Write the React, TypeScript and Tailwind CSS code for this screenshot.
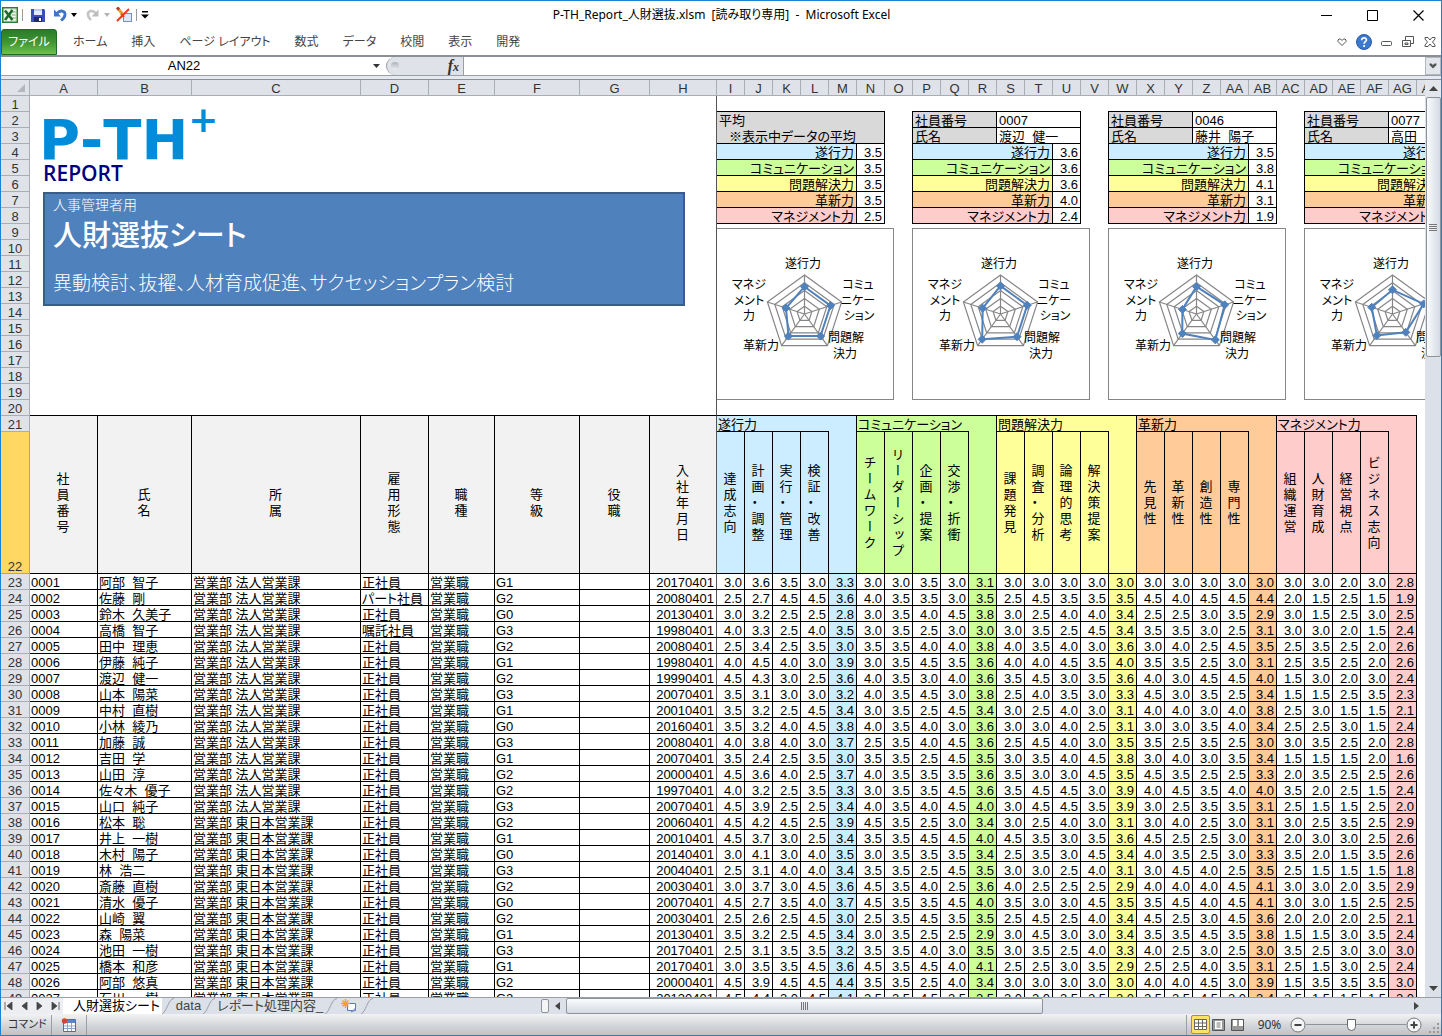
import React from 'react';

type Tone = 'blue' | 'green' | 'yellow' | 'orange' | 'pink';

interface Group {
  title: string;
  tone: Tone;
  items: string[];
}

interface Employee {
  name: string;
  grade: string;
  joined: string;
  scores: string;
  type?: string;
}

interface Card {
  id?: string;
  name?: string;
  values: number[];
}

const toneBg: Record<Tone, string> = {
  blue: 'bg-[#ccecff]',
  green: 'bg-[#ccff99]',
  yellow: 'bg-[#ffff99]',
  orange: 'bg-[#ffcc99]',
  pink: 'bg-[#ffcccc]',
};

const groups: Group[] = [
  { title: '遂行力', tone: 'blue', items: ['達成志向', '計画・調整', '実行・管理', '検証・改善'] },
  { title: 'コミュニケーション', tone: 'green', items: ['チームワーク', 'リーダーシップ', '企画・提案', '交渉・折衝'] },
  { title: '問題解決力', tone: 'yellow', items: ['課題発見', '調査・分析', '論理的思考', '解決策提案'] },
  { title: '革新力', tone: 'orange', items: ['先見性', '革新性', '創造性', '専門性'] },
  { title: 'マネジメント力', tone: 'pink', items: ['組織運営', '人財育成', '経営視点', 'ビジネス志向'] },
];

const profileColumns = ['社員番号', '氏名', '所属', '雇用形態', '職種', '等級', '役職', '入社年月日'];

const columnLetters = [
  'A', 'B', 'C', 'D', 'E', 'F', 'G', 'H', 'I', 'J', 'K', 'L', 'M', 'N', 'O', 'P', 'Q', 'R', 'S', 'T',
  'U', 'V', 'W', 'X', 'Y', 'Z', 'AA', 'AB', 'AC', 'AD', 'AE', 'AF', 'AG', 'AH',
];

const cards: Card[] = [
  { values: [3.5, 3.5, 3.5, 3.5, 2.5] },
  { id: '0007', name: '渡辺  健一', values: [3.6, 3.6, 3.6, 4.0, 2.4] },
  { id: '0046', name: '藤井  陽子', values: [3.5, 3.8, 4.1, 3.1, 1.9] },
  { id: '0077', name: '高田', values: [3.1, 4.2, 2.9, 3.4, 2.8] },
];

const employees: Employee[] = [
  { name: '阿部  智子', grade: 'G1', joined: '20170401', scores: '3.0 3.6 3.5 3.0 3.3 3.0 3.0 3.5 3.0 3.1 3.0 3.0 3.0 3.0 3.0 3.0 3.0 3.0 3.0 3.0 3.0 3.0 2.0 3.0 2.8' },
  { name: '佐藤  剛', grade: 'G2', joined: '20080401', type: 'パート社員', scores: '2.5 2.7 4.5 4.5 3.6 4.0 3.5 3.5 3.0 3.5 2.5 4.5 3.5 3.5 3.5 4.5 4.0 4.5 4.5 4.4 2.0 1.5 2.5 1.5 1.9' },
  { name: '鈴木  久美子', grade: 'G0', joined: '20130401', scores: '3.0 3.2 2.5 2.5 2.8 3.0 3.5 4.0 4.5 3.8 3.0 2.5 4.0 4.0 3.4 2.5 2.5 3.0 3.5 2.9 3.0 1.5 2.5 3.0 2.5' },
  { name: '高橋  智子', grade: 'G3', joined: '19980401', type: '嘱託社員', scores: '4.0 3.3 2.5 4.0 3.5 3.0 3.5 2.5 3.0 3.0 3.0 3.5 2.5 4.5 3.4 3.5 3.5 3.0 2.5 3.1 3.0 3.0 2.0 1.5 2.4' },
  { name: '田中  理恵', grade: 'G2', joined: '20080401', scores: '2.5 3.4 2.5 3.5 3.0 3.5 3.5 4.0 4.0 3.8 4.0 3.5 4.0 3.0 3.6 3.0 4.0 2.5 4.5 3.5 2.5 3.5 2.5 2.0 2.6' },
  { name: '伊藤  純子', grade: 'G1', joined: '19980401', scores: '4.0 4.5 4.0 3.0 3.9 3.0 3.5 4.5 3.5 3.6 4.0 4.0 4.5 3.5 4.0 3.5 3.5 2.5 3.0 3.1 2.5 3.5 2.5 2.0 2.6' },
  { name: '渡辺  健一', grade: 'G2', joined: '19990401', scores: '4.5 4.3 3.0 2.5 3.6 4.0 3.5 3.0 4.0 3.6 3.5 4.5 3.0 3.5 3.6 4.0 3.0 4.5 4.5 4.0 1.5 3.0 2.0 3.0 2.4' },
  { name: '山本  陽菜', grade: 'G3', joined: '20070401', scores: '3.5 3.1 3.0 3.0 3.2 4.0 3.5 4.5 3.0 3.8 2.5 4.0 3.5 3.0 3.3 4.5 3.0 3.5 2.5 3.4 1.5 1.5 2.5 3.5 2.3' },
  { name: '中村  直樹', grade: 'G1', joined: '20010401', scores: '3.5 3.2 2.5 4.5 3.4 3.0 3.5 2.5 4.5 3.4 3.0 2.5 4.0 3.0 3.1 4.0 4.0 3.0 4.0 3.8 2.5 3.0 1.5 1.5 2.1' },
  { name: '小林  綾乃', grade: 'G0', joined: '20160401', scores: '3.5 3.2 4.0 4.5 3.8 4.0 3.5 4.0 3.0 3.6 3.0 3.0 4.0 2.5 3.1 3.0 3.0 3.5 4.0 3.4 2.5 2.5 3.0 1.5 2.4' },
  { name: '加藤  誠', grade: 'G3', joined: '20080401', scores: '4.0 3.8 4.0 3.0 3.7 2.5 3.5 4.0 4.5 3.6 2.5 4.5 4.0 3.0 3.5 3.5 2.5 3.5 2.5 3.0 3.0 3.5 2.5 2.0 2.8' },
  { name: '吉田  学', grade: 'G1', joined: '20070401', scores: '3.5 2.4 2.5 3.5 3.0 3.5 3.5 2.5 4.5 3.5 3.0 3.5 4.0 4.5 3.8 3.0 4.0 3.0 3.5 3.4 1.5 1.5 1.5 2.0 1.6' },
  { name: '山田  淳', grade: 'G2', joined: '20000401', scores: '4.5 3.6 4.0 2.5 3.7 4.0 3.5 3.5 3.5 3.6 3.5 3.0 3.0 4.5 3.5 4.5 3.5 2.5 2.5 3.3 2.0 3.5 2.5 2.5 2.6' },
  { name: '佐々木  優子', grade: 'G2', joined: '19970401', scores: '4.0 3.2 2.5 3.5 3.3 3.0 3.5 3.5 4.5 3.6 3.5 4.5 4.5 3.0 3.9 4.0 4.5 3.5 4.0 4.0 3.5 2.0 2.5 1.5 2.4' },
  { name: '山口  純子', grade: 'G3', joined: '20070401', scores: '4.5 3.9 2.5 2.5 3.4 4.0 3.5 4.0 4.5 4.0 3.0 4.5 4.5 3.5 3.9 3.0 2.5 3.5 3.5 3.1 2.5 1.5 1.5 2.5 2.0' },
  { name: '松本  聡', grade: 'G2', joined: '20060401', scores: '4.5 4.2 4.5 2.5 3.9 4.5 3.5 2.5 3.0 3.4 3.0 2.5 4.0 3.0 3.1 3.0 4.0 2.5 3.0 3.1 3.0 2.5 3.5 2.5 2.9' },
  { name: '井上  一樹', grade: 'G1', joined: '20010401', scores: '4.5 3.7 3.0 2.5 3.4 3.5 3.5 4.5 4.5 4.0 4.5 3.5 3.0 3.5 3.6 4.5 2.5 2.5 3.0 3.1 2.0 3.0 3.0 2.5 2.6' },
  { name: '木村  陽子', grade: 'G0', joined: '20140401', scores: '3.0 4.1 3.0 4.0 3.5 3.0 3.5 3.5 3.5 3.4 2.5 3.5 3.0 4.5 3.4 4.0 3.5 2.5 3.0 3.3 3.5 2.0 1.5 3.5 2.6' },
  { name: '林  浩二', grade: 'G3', joined: '20040401', scores: '2.5 3.1 4.0 4.0 3.4 3.5 3.5 2.5 4.5 3.5 3.0 3.0 2.5 4.0 3.1 3.0 4.5 4.0 2.5 3.5 2.5 1.5 1.5 1.5 1.8' },
  { name: '斎藤  直樹', grade: 'G2', joined: '20030401', scores: '3.0 3.7 3.0 4.5 3.6 4.5 3.5 4.0 2.5 3.6 4.0 2.5 2.5 2.5 2.9 4.0 4.0 4.0 4.5 4.1 3.0 3.0 2.0 3.5 2.9' },
  { name: '清水  優子', grade: 'G0', joined: '20070401', scores: '4.5 2.7 3.5 4.0 3.7 4.5 3.5 3.5 4.5 4.0 3.5 3.0 3.0 4.5 3.5 3.5 4.5 4.0 4.5 4.1 3.0 3.0 1.5 2.5 2.5' },
  { name: '山崎  翼', grade: 'G2', joined: '20030401', scores: '2.5 2.6 2.5 4.5 3.0 2.5 3.5 4.5 3.5 3.5 2.5 4.5 2.5 4.0 3.4 4.5 2.5 3.0 4.5 3.6 2.0 2.0 2.0 2.5 2.1' },
  { name: '森  陽菜', grade: 'G1', joined: '20130401', scores: '3.5 3.2 2.5 4.5 3.4 3.0 3.5 2.5 2.5 2.9 3.0 4.5 3.0 3.0 3.4 3.5 3.5 4.5 3.5 3.8 1.5 1.5 3.0 3.5 2.4' },
  { name: '池田  一樹', grade: 'G3', joined: '20170401', scores: '2.5 3.1 3.5 3.5 3.2 3.5 3.5 4.0 3.0 3.5 3.0 3.5 2.5 4.0 3.3 4.0 2.5 3.0 2.5 3.0 3.5 2.5 3.0 3.0 3.0' },
  { name: '橋本  和彦', grade: 'G1', joined: '20170401', scores: '3.0 3.5 3.5 4.5 3.6 4.5 3.5 4.5 4.0 4.1 2.5 2.5 3.0 3.5 2.9 2.5 2.5 4.0 3.5 3.1 2.5 1.5 3.0 2.5 2.4' },
  { name: '阿部  悠真', grade: 'G2', joined: '20000401', scores: '4.5 3.9 4.5 4.5 4.4 3.5 3.5 2.5 4.0 3.4 3.0 3.0 3.0 3.0 3.0 4.0 4.0 4.5 3.0 3.9 1.5 3.5 3.5 3.5 3.0' },
  { name: '石川  一樹', grade: 'G2', joined: '20130401', scores: '4.5 4.4 3.0 4.5 4.1 3.5 3.5 4.5 3.5 3.5 3.0 3.0 3.5 2.5 3.0 2.5 3.5 4.5 3.0 3.4 3.5 1.5 1.5 1.5 2.0' },
];

const ribbonTabs = ['ホーム', '挿入', 'ページ レイアウト', '数式', 'データ', '校閲', '表示', '開発'];

function Caret({ muted }: { muted?: boolean }) {
  return (
    <svg viewBox="0 0 6 4" className={`h-1 w-1.5 ${muted ? 'fill-[#b5b5b5]' : 'fill-black'}`}>
      <path d="M0 0h6L3 4z" />
    </svg>
  );
}

function QuickAccess() {
  return (
    <div className="flex flex-1 items-center pl-px">
      <svg viewBox="0 0 16 16" className="size-4" aria-label="Excel">
        <rect x=".75" y=".75" width="14.5" height="14.5" fill="#eef6ec" stroke="#2b7d35" strokeWidth="1.5" />
        <path d="M9 2h5v12H9z" fill="#fff" stroke="#8cc08f" strokeWidth=".6" />
        <path d="M10 5h3.5M10 8h3.5M10 11h3.5" stroke="#58a55c" />
        <path d="M3 3.5 10.5 13M10.5 3 3 13" stroke="#1e6b2a" strokeWidth="2.6" />
      </svg>
      <span className="mx-1 h-3 w-px bg-[#9a9a9a]" />
      <button aria-label="上書き保存" className="ml-1">
        <svg viewBox="0 0 14 14" className="size-3.5">
          <path d="M0 1h13l1 1v12H0z" fill="#3b4fb8" />
          <path d="M3 1h8v6H3z" fill="#e4ecfa" />
          <path d="M3 1h8v2H3z" fill="#b9cdf2" />
          <path d="M3 9h8v5H3z" fill="#1f2a66" />
          <path d="M8 10h2v3H8z" fill="#fff" />
        </svg>
      </button>
      <button aria-label="元に戻す" className="ml-2">
        <svg viewBox="0 0 15 14" className="h-3.5 w-[15px]">
          <path d="M4 5.5C7 1.5 12.5 2.5 12 7c-.3 2.500-2 4-4 5.500" fill="none" stroke="#3f74c9" strokeWidth="2.8" />
          <path d="M1 1.500v7h7z" fill="#3f74c9" />
        </svg>
      </button>
      <button aria-label="元に戻す一覧" className="ml-[3px]"><Caret /></button>
      <button aria-label="やり直し" className="ml-2">
        <svg viewBox="0 0 15 14" className="h-3.5 w-[15px]">
          <path d="M11 5.500C8 1.500 2.500 2.500 3 7c.2 2 1.200 3.500 3 5" fill="none" stroke="#c4c4c4" strokeWidth="2.6" />
          <path d="M13.500 1.500v7h-7z" fill="#bdbdbd" />
        </svg>
      </button>
      <button aria-label="やり直し一覧" className="ml-1"><Caret muted /></button>
      <button aria-label="デザイン モード" className="ml-[6px]">
        <svg viewBox="0 0 16 16" className="size-4">
          <rect x="7.500" y="6.500" width="8" height="8" fill="#dbe7f7" stroke="#7790b8" />
          <path d="m1.500 1 5 6" stroke="#e0a030" strokeWidth="3" />
          <path d="m1 .5 2 2" stroke="#b8372b" strokeWidth="3" />
          <path d="M1 14 13 2M5 7l3 3" stroke="#f03a17" strokeWidth="2" />
        </svg>
      </button>
      <span className="ml-1 h-3 w-px bg-[#9a9a9a]" />
      <button aria-label="クイック アクセス ツール バーのユーザー設定" className="ml-1">
        <svg viewBox="0 0 8 8" className="size-2">
          <path d="M1 0h6v1.500H1zM0 3.500h8L4 7.500z" />
        </svg>
      </button>
    </div>
  );
}

function TitleBar() {
  return (
    <header className="flex h-7 shrink-0 items-center bg-white">
      <QuickAccess />
      <h1 className="font-['Noto_Sans','Noto_Sans_CJK_JP',sans-serif] text-xs whitespace-pre text-black">P-TH_Report_人財選抜.xlsm  [読み取り専用]  -  Microsoft Excel</h1>
      <div className="flex flex-1 justify-end">
        <button aria-label="最小化" className="flex h-7 w-[46px] items-center justify-center">
          <svg viewBox="0 0 11 11" className="size-[11px]"><path d="M0 5.500h11" stroke="#000" /></svg>
        </button>
        <button aria-label="最大化" className="flex h-7 w-[46px] items-center justify-center">
          <svg viewBox="0 0 11 11" className="size-[11px]"><path d="M.5.5h10v10H.5z" fill="none" stroke="#000" /></svg>
        </button>
        <button aria-label="閉じる" className="flex h-7 w-[46px] items-center justify-center">
          <svg viewBox="0 0 11 11" className="size-[11px]"><path d="m.5.5 10 10m0-10-10 10" stroke="#000" strokeWidth="1.2" /></svg>
        </button>
      </div>
    </header>
  );
}

function RibbonTabs() {
  return (
    <nav className="flex h-[26px] shrink-0 items-center bg-white text-xs text-[#444]">
      <button className="mr-1 h-[26px] w-14 rounded-t-[3px] border border-[#1d6b24] bg-linear-to-b from-[#2a7a2a] via-[#3f9433] to-[#6cc04a] text-white">
        ファイル
      </button>
      {ribbonTabs.map((tab) => (
        <button key={tab} className="px-3">{tab}</button>
      ))}
      <div className="ml-auto flex items-center gap-1.5 pr-[3px]">
        <button aria-label="リボンの最小化">
          <svg viewBox="0 0 16 16" className="size-4">
            <path d="M8 11.500 4 7.500V6l1-1h1.500L8 6.500 9.500 5H11l1 1v1.500z" fill="#fff" stroke="#555" />
          </svg>
        </button>
        <button aria-label="ヘルプ">
          <svg viewBox="0 0 16 16" className="size-4">
            <circle cx="8" cy="8" r="7.500" fill="#3b78d0" stroke="#2a5aa8" />
            <path d="M5.700 6.200C5.700 3 10.500 3.300 10.400 6 10.300 7.700 8.100 7.600 8.100 9.700" fill="none" stroke="#fff" strokeWidth="1.7" />
            <circle cx="8.100" cy="12" r="1.100" fill="#fff" />
          </svg>
        </button>
        <button aria-label="ウィンドウの最小化">
          <svg viewBox="0 0 16 16" className="size-4"><rect x="3.500" y="7.500" width="10" height="4" rx="1" fill="#fff" stroke="#555" /></svg>
        </button>
        <button aria-label="元のサイズに戻す">
          <svg viewBox="0 0 16 16" className="size-4" fill="#fff" stroke="#555">
            <path d="M5.500 2.500h8v7h-8z" />
            <path d="M2.500 6.500h8v6h-8z" />
            <path d="M5 9h3v1.500H5z" />
          </svg>
        </button>
        <button aria-label="ブックを閉じる">
          <svg viewBox="0 0 16 16" className="size-4">
            <path d="M3 3.500h3L8 6l2-2.500h3V5l-2.500 3L13 11v1.500h-3L8 10l-2 2.500H3V11l2.500-3L3 5z" fill="#fff" stroke="#555" />
          </svg>
        </button>
      </div>
    </nav>
  );
}

function FormulaBar() {
  return (
    <div className="shrink-0 border-t-2 border-b border-t-[#8b8f96] border-b-[#8b8f96] bg-[#e6e8f2] pb-[3px]">
      <div className="flex h-[19px] border-b border-[#9a9ea6] bg-white">
        <div className="flex w-[385px] items-center">
          <input aria-label="名前ボックス" defaultValue="AN22" className="w-[366px] bg-transparent text-center text-[13px] leading-[18px] outline-none" />
          <button aria-label="名前の一覧" className="ml-1.5">
            <svg viewBox="0 0 7 4" className="h-1 w-[7px] fill-[#333]"><path d="M0 0h7L3.500 4z" /></svg>
          </button>
        </div>
        <div className="flex w-[78px] items-center justify-between rounded-l-full border-r border-l border-[#9a9ea6] bg-[#dfe2e8] pr-1 pl-1">
          <span className="size-2 rounded-full bg-linear-to-b from-[#aeb3ba] to-[#eceef1]" />
          <button aria-label="関数の挿入" className="font-['Liberation_Serif',serif] text-base leading-[18px] font-bold text-[#333] italic">
            f<span className="text-xs">x</span>
          </button>
        </div>
        <input aria-label="数式バー" className="min-w-0 flex-1 outline-none" />
        <button aria-label="数式バーの展開" className="flex w-4 items-center justify-center border border-[#b4b8be] bg-[#e3e6ea]">
          <svg viewBox="0 0 8 6" className="h-1.5 w-2"><path d="M.5.5h2L4 2 5.500.500h2V2L4 5.500.500 2z" fill="#555" /></svg>
        </button>
      </div>
    </div>
  );
}

const CX = 87.5;
const CY = 85;
const RADIUS = 39;

function radarPoint(axis: number, value: number) {
  const angle = (Math.PI * 2 * axis) / 5;
  const r = (RADIUS * value) / 5;
  return { x: CX + r * Math.sin(angle), y: CY - r * Math.cos(angle) };
}

function polygon(values: number[]) {
  return values
    .map((v, i) => radarPoint(i, v))
    .map((p) => `${p.x.toFixed(1)},${p.y.toFixed(1)}`)
    .join(' ');
}

function RadarChart({ values }: { values: number[] }) {
  return (
    <svg viewBox="0 0 176 170" className="block h-[170px] w-44 overflow-hidden">
      <g fill="none" stroke="#868686" strokeWidth="1.2">
        {[1, 2, 3, 4, 5].map((ring) => (
          <polygon key={ring} points={polygon([ring, ring, ring, ring, ring])} />
        ))}
        {[0, 1, 2, 3, 4].map((axis) => {
          const end = radarPoint(axis, 5);
          return <line key={axis} x1={CX} y1={CY} x2={end.x} y2={end.y} />;
        })}
      </g>
      <polygon points={polygon(values)} fill="none" stroke="#4f81bd" strokeWidth="2" />
      {values.map((v, i) => {
        const p = radarPoint(i, v);
        return <path key={i} d={`M${p.x} ${p.y - 4}l4 4-4 4-4-4z`} fill="#4f81bd" stroke="#4f81bd" />;
      })}
      <g fontSize="12" textAnchor="middle" fill="#000">
        <text x="86" y="39">遂行力</text>
        <text x="141" y="60">コミュ</text>
        <text x="141" y="76">ニケー</text>
        <text x="142" y="91">ション</text>
        <text x="129" y="113">問題解</text>
        <text x="128" y="129">決力</text>
        <text x="44" y="121">革新力</text>
        <text x="32" y="60">マネジ</text>
        <text x="32" y="76">メント</text>
        <text x="32" y="91">力</text>
      </g>
    </svg>
  );
}

function ScoreCard({ card }: { card: Card }) {
  const edge = card.id ? 'border-l' : '';
  const line = 'border-r border-b border-black align-bottom';

  return (
    <div className="shrink-0">
      <table className={`w-px table-fixed border-separate border-spacing-0 border-t border-black ${edge}`}>
        <colgroup>
          <col className="w-[84px]" />
          <col className="w-14" />
          <col className="w-7" />
        </colgroup>
        <tbody>
          {card.id ? (
            <>
              <tr className="h-4">
                <th className={`bg-[#d9d9d9] pl-0.5 text-left font-normal ${line}`}>社員番号</th>
                <td colSpan={2} className={`pl-0.5 ${line}`}>{card.id}</td>
              </tr>
              <tr className="h-4">
                <th className={`bg-[#d9d9d9] pl-0.5 text-left font-normal ${line}`}>氏名</th>
                <td colSpan={2} className={`pl-0.5 whitespace-pre ${line}`}>{card.name}</td>
              </tr>
            </>
          ) : (
            <>
              <tr className="h-4">
                <th colSpan={3} className="border-r border-black bg-[#d9d9d9] pl-0.5 text-left font-normal">平均</th>
              </tr>
              <tr className="h-4">
                <td colSpan={3} className={`bg-[#d9d9d9] pl-3 ${line}`}>※表示中データの平均</td>
              </tr>
            </>
          )}
          {groups.map((group, i) => (
            <tr key={group.title} className="h-4">
              <th colSpan={2} className={`pr-0.5 text-right font-normal ${toneBg[group.tone]} ${line}`}>{group.title}</th>
              <td className={`pr-0.5 text-right ${line}`}>{card.values[i].toFixed(1)}</td>
            </tr>
          ))}
        </tbody>
      </table>
      <div className={`mt-1 border-y border-r border-[#868686] bg-white ${edge}`}>
        <RadarChart values={card.values} />
      </div>
    </div>
  );
}

function Cover() {
  return (
    <div className="pt-6 pl-[13px]">
      <div className="-ml-1 flex h-10 font-['DejaVu_Sans',sans-serif] font-bold text-[#008cd9] [font-kerning:none]">
        <span className="text-[56px] leading-10">P-TH</span>
        <sup className="top-0 -mt-5 text-4xl leading-10">+</sup>
      </div>
      <p className="font-['Open_Sans',sans-serif] text-[21px] leading-[26px] font-semibold text-[#00007f]">REPORT</p>
      <div className="mt-1.5 h-[114px] w-[642px] border-2 border-[#385d8a] bg-[#4f81bd] pt-px pl-2 text-white">
        <p className="text-sm leading-5 font-light">人事管理者用</p>
        <h2 className="text-[29px] leading-[42px] font-medium">人財選抜シート</h2>
        <p className="mt-3.5 text-[19px] leading-[26px] font-light">異動検討、抜擢、人材育成促進、サクセッションプラン検討</p>
      </div>
    </div>
  );
}

// One character per line, the way stacked cell text is drawn
function Stacked({ text }: { text: string }) {
  return (
    <div className="flex flex-col items-center pr-1">
      {text.split('').map((ch, i) => (
        <span key={i} className="flex h-4 w-4 items-center justify-center leading-4 [writing-mode:vertical-rl]">{ch}</span>
      ))}
    </div>
  );
}

function RowNumber({ n }: { n: number }) {
  return (
    <th
      scope="row"
      className={`h-4 border-r border-b text-center align-bottom font-normal text-[#333] ${
        n === 22 ? 'border-[#c9a44c] bg-[#ffd863]' : 'border-[#a9adb4] bg-[#dfe2e8]'
      }`}
    >
      {n}
    </th>
  );
}

function Sheet() {
  const cell = 'border-r border-b border-black';
  const frozen = 'border-r border-b border-r-[#555] border-b-black';

  return (
    <table className="w-px table-fixed border-separate border-spacing-0 text-[13px] leading-[13px] text-black">
      <colgroup>
        <col className="w-[29px]" />
        <col className="w-[68px]" />
        <col className="w-[94px]" />
        <col className="w-[169px]" />
        <col className="w-[68px]" />
        <col className="w-[66px]" />
        <col className="w-[85px]" />
        <col className="w-[70px]" />
        <col className="w-[67px]" />
        {columnLetters.slice(8).map((letter) => (
          <col key={letter} className="w-7" />
        ))}
      </colgroup>
      <thead>
        <tr>
          <th className="h-4 border-r border-b border-[#a9adb4] bg-[#dfe2e8]">
            <svg viewBox="0 0 8 8" className="mr-1 ml-auto size-2"><path d="M8 0v8H0z" fill="#b4b8be" /></svg>
          </th>
          {columnLetters.map((letter) => (
            <th key={letter} scope="col" className="border-r border-b border-[#a9adb4] bg-[#dfe2e8] text-center align-bottom font-normal text-[#333]">
              {letter}
            </th>
          ))}
        </tr>
      </thead>
      <tbody>
        {Array.from({ length: 20 }, (_, i) => (
          <tr key={i}>
            <RowNumber n={i + 1} />
            {i === 0 && (
              <>
                <td rowSpan={20} colSpan={8} className={`align-top ${frozen}`}>
                  <Cover />
                </td>
                <td rowSpan={20} colSpan={25} className="border-b border-black align-top">
                  <div className="flex w-[728px] gap-[18px] overflow-hidden pt-[15px]">
                    {cards.map((card, k) => (
                      <ScoreCard key={k} card={card} />
                    ))}
                  </div>
                </td>
                <td rowSpan={20} />
              </>
            )}
          </tr>
        ))}
        <tr>
          <RowNumber n={21} />
          {profileColumns.map((title, i) => (
            <th
              key={title}
              rowSpan={2}
              className={`bg-[#f2f2f2] pt-4 font-normal ${i === 7 ? frozen : cell}`}
            >
              <Stacked text={title} />
            </th>
          ))}
          {groups.map((group) => (
            <React.Fragment key={group.title}>
              <th colSpan={4} className={`border-b border-black pl-px text-left align-bottom font-normal ${toneBg[group.tone]}`}>{group.title}</th>
              <td rowSpan={2} className={`${cell} ${toneBg[group.tone]}`} />
            </React.Fragment>
          ))}
          <td />
        </tr>
        <tr className="h-[142px]">
          <RowNumber n={22} />
          {groups.map((group) =>
            group.items.map((item) => (
              <th key={item} className={`font-normal ${cell} ${toneBg[group.tone]}`}>
                <Stacked text={item} />
              </th>
            ))
          )}
          <td />
        </tr>
        {employees.map((person, i) => (
          <tr key={i} className="align-bottom">
            <RowNumber n={23 + i} />
            <td className={`pl-px ${cell}`}>{String(i + 1).padStart(4, '0')}</td>
            <td className={`pl-px whitespace-pre ${cell}`}>{person.name}</td>
            <td className={`pl-px ${cell}`}>{i < 15 ? '営業部 法人営業課' : '営業部 東日本営業課'}</td>
            <td className={`pl-px whitespace-nowrap ${cell}`}>{person.type ?? '正社員'}</td>
            <td className={`pl-px ${cell}`}>営業職</td>
            <td className={`pl-px ${cell}`}>{person.grade}</td>
            <td className={cell} />
            <td className={`pr-0.5 text-right ${frozen}`}>{person.joined}</td>
            {person.scores.split(' ').map((score, k) => (
              <td key={k} className={`pr-0.5 text-right ${cell} ${k % 5 === 4 ? toneBg[groups[(k - 4) / 5].tone] : ''}`}>
                {score}
              </td>
            ))}
            <td />
          </tr>
        ))}
      </tbody>
    </table>
  );
}

function VerticalScroll() {
  return (
    <div className="flex w-4 shrink-0 flex-col items-center bg-[#dce0e8]">
      <button aria-label="上へスクロール" className="flex h-[17px] w-full items-center justify-center bg-[#e3e6ea]">
        <svg viewBox="0 0 9 5" className="h-[5px] w-[9px] fill-[#444]"><path d="M0 5h9L4.500 0z" /></svg>
      </button>
      <div className="flex h-[260px] w-[15px] flex-col items-center justify-center gap-px rounded-xs border border-[#8d929b] bg-linear-to-r from-[#fafbfc] to-[#d5dae3]">
        <span className="h-px w-2 bg-[#777]" />
        <span className="h-px w-2 bg-[#777]" />
        <span className="h-px w-2 bg-[#777]" />
        <span className="h-px w-2 bg-[#777]" />
      </div>
      <button aria-label="下へスクロール" className="mt-auto flex h-[17px] w-full items-center justify-center">
        <svg viewBox="0 0 9 5" className="h-[5px] w-[9px] fill-[#444]"><path d="M0 0h9L4.500 5z" /></svg>
      </button>
    </div>
  );
}

function Slash() {
  return (
    <svg viewBox="0 0 12 16" className="h-4 w-3 shrink-0">
      <path d="M0 16C5 14 6 1 12 .5" fill="none" stroke="#9a9ea6" />
    </svg>
  );
}

function SheetTabs() {
  const arrows = [
    { label: '先頭のシート', d: 'M1 0v8M8 0v8L3 4z' },
    { label: '前のシート', d: 'M7 0v8L2 4z' },
    { label: '次のシート', d: 'M2 0v8l5-4z' },
    { label: '最後のシート', d: 'M8 0v8M1 0v8l5-4z' },
  ];

  return (
    <div className="flex h-[17px] shrink-0 items-center border-t border-[#9a9ea6] bg-[#dce0e8] text-[13px] leading-4 text-[#444]">
      <div className="flex h-4 w-[62px] items-center justify-around bg-[#eceef2]">
        {arrows.map((arrow) => (
          <button key={arrow.label} aria-label={arrow.label}>
            <svg viewBox="0 0 9 8" className="h-2 w-[9px]"><path d={arrow.d} fill="#444" stroke="#444" strokeWidth=".8" /></svg>
          </button>
        ))}
      </div>
      <button className="h-4 bg-white pr-0.5 pl-2.5 whitespace-nowrap text-black">人財選抜シート</button>
      <Slash />
      <button className="px-0.5 whitespace-nowrap">data</button>
      <Slash />
      <button className="px-0.5 whitespace-nowrap">レポート処理内容_</button>
      <Slash />
      <button aria-label="ワークシートの挿入" className="px-1">
        <svg viewBox="0 0 16 14" className="h-3.5 w-4">
          <path d="M6.500 4.500h8v7h-8z" fill="#fff" stroke="#5a78b0" />
          <path d="m10 13 4.500-1.500V9z" fill="#9db7e0" stroke="#5a78b0" strokeWidth=".6" />
          <path d="M4.500 0v9M0 4.500h9M1.500 1.500l6 6m0-6-6 6" stroke="#eda32c" strokeWidth="1.3" />
        </svg>
      </button>
      <Slash />
      <div className="ml-auto flex h-4 w-5/8 items-center">
        <span className="mr-1.5 h-3.5 w-2 rounded-xs border border-[#8d929b] bg-[#f3f4f6]" />
        <button aria-label="左へスクロール" className="mr-1.5">
          <svg viewBox="0 0 5 8" className="h-2 w-[5px] fill-[#444]"><path d="M5 0v8L0 4z" /></svg>
        </button>
        <div className="flex h-4 w-[477px] items-center justify-center gap-px rounded-xs border border-[#8d929b] bg-linear-to-b from-[#fafbfc] to-[#d5dae3]">
          <span className="h-2 w-px bg-[#777]" />
          <span className="h-2 w-px bg-[#777]" />
          <span className="h-2 w-px bg-[#777]" />
          <span className="h-2 w-px bg-[#777]" />
        </div>
        <button aria-label="右へスクロール" className="mr-[22px] ml-auto">
          <svg viewBox="0 0 5 8" className="h-2 w-[5px] fill-[#444]"><path d="M0 0v8l5-4z" /></svg>
        </button>
      </div>
    </div>
  );
}

function StatusBar() {
  return (
    <footer className="flex h-[21px] shrink-0 items-center bg-linear-to-b from-[#f2f3f4] via-[#d6d8db] to-[#bfc2c7] text-[#333]">
      <span className="pl-[7px] text-[11px]">コマンド</span>
      <span className="ml-1 h-5 w-px bg-[#9a9ea6]" />
      <button aria-label="マクロの記録" className="mx-[9px]">
        <svg viewBox="0 0 16 14" className="h-3.5 w-4">
          <path d="M2.500 1.500h12v12h-12z" fill="#fff" stroke="#4a6fb0" />
          <path d="M3 2h11v3H3z" fill="#5b86cc" />
          <path d="M3 8h11M3 10.500h11M6.500 5v8M10.500 5v8" stroke="#8aa6d6" />
          <circle cx="3.500" cy="3" r="2.700" fill="#d9432f" />
        </svg>
      </button>
      <span className="h-5 w-px bg-[#9a9ea6]" />
      <div className="ml-auto flex h-full items-center">
        <span className="mr-1 h-5 w-px bg-[#9a9ea6]" />
        <button aria-label="標準" className="flex h-[19px] w-[19px] items-center justify-center rounded-xs border border-[#c08a1e] bg-[#ffdf6e]">
          <svg viewBox="0 0 13 11" className="h-[11px] w-[13px]"><path d="M.5.5h12v10H.5zM.5 4h12M.5 7.500h12M4.500.500v10M8.500.500v10" fill="#fff" stroke="#666" /></svg>
        </button>
        <button aria-label="ページ レイアウト" className="ml-0.5">
          <svg viewBox="0 0 13 12" className="h-3 w-[13px]">
            <path d="M.5.5h12v11H.5z" fill="#999" stroke="#555" />
            <path d="M3 2h7v8H3z" fill="#fff" />
            <path d="M4.500 4h4M4.500 6h4M4.500 8h4" stroke="#777" />
          </svg>
        </button>
        <button aria-label="改ページ プレビュー" className="ml-[6px]">
          <svg viewBox="0 0 13 12" className="h-3 w-[13px]">
            <path d="M.5.5h12v11H.5z" fill="#999" stroke="#555" />
            <path d="M2 1h4v6H2zM8 1h4v6H8z" fill="#fff" />
          </svg>
        </button>
        <button className="ml-3 w-[27px] font-['Noto_Sans',sans-serif] text-xs">90%</button>
        <button aria-label="縮小" className="ml-[7px]">
          <svg viewBox="0 0 16 16" className="size-4"><circle cx="8" cy="8" r="7" fill="#f4f5f6" stroke="#777" /><path d="M4.500 8h7" stroke="#444" strokeWidth="2" /></svg>
        </button>
        <input
          type="range"
          aria-label="ズーム"
          min={0}
          max={200}
          defaultValue={90}
          className="h-4 w-[100px] appearance-none bg-[linear-gradient(#8d929b,#8d929b)] bg-[length:100%_1px] bg-center bg-no-repeat [&::-webkit-slider-thumb]:h-3 [&::-webkit-slider-thumb]:w-[9px] [&::-webkit-slider-thumb]:appearance-none [&::-webkit-slider-thumb]:rounded-b-full [&::-webkit-slider-thumb]:border [&::-webkit-slider-thumb]:border-[#666] [&::-webkit-slider-thumb]:bg-white"
        />
        <button aria-label="拡大">
          <svg viewBox="0 0 16 16" className="size-4"><circle cx="8" cy="8" r="7" fill="#f4f5f6" stroke="#777" /><path d="M4.500 8h7M8 4.500v7" stroke="#444" strokeWidth="2" /></svg>
        </button>
        <svg viewBox="0 0 12 12" className="ml-[7px] h-3 w-3 self-end fill-[#999]">
          <path d="M8 0h2v2H8zM4 4h2v2H4zM8 4h2v2H8zM0 8h2v2H0zM4 8h2v2H4zM8 8h2v2H8z" />
        </svg>
      </div>
    </footer>
  );
}

export default function App() {
  return (
    <div className="flex h-screen flex-col overflow-hidden border border-[#1883d7] bg-white font-['Liberation_Sans','Noto_Sans_CJK_JP',sans-serif] [font-feature-settings:'palt']">
      <TitleBar />
      <RibbonTabs />
      <FormulaBar />
      <main className="flex min-h-0 flex-1">
        <div className="min-w-0 flex-1 overflow-hidden">
          <Sheet />
        </div>
        <VerticalScroll />
      </main>
      <SheetTabs />
      <StatusBar />
    </div>
  );
}
